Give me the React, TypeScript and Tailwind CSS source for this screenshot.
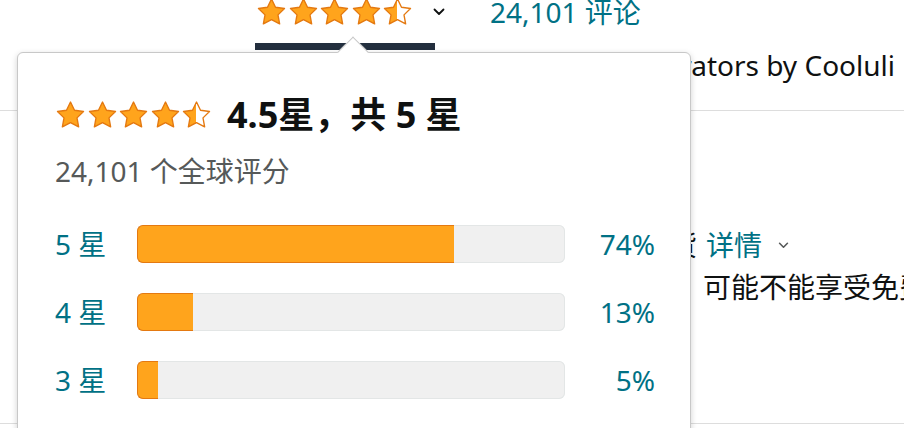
import React from 'react';

const rows = [
  { label: '5 星', pct: 74 },
  { label: '4 星', pct: 13 },
  { label: '3 星', pct: 5 },
];

const STAR = 'M12 1.6l3.2 6.6 7.2 1-5.2 5.1 1.3 7.2L12 18.1l-6.5 3.4 1.3-7.2L1.6 9.2l7.2-1z';

const Star = ({ half, id }: { half?: boolean; id: string }) => (
  <svg viewBox="0 0 24 24" className="w-[31px] h-[30px] shrink-0">
    <defs>
      <linearGradient id={id} x1="0" x2="1" y1="0" y2="0">
        <stop offset="50%" stopColor="#FFA41C" />
        <stop offset="50%" stopColor="#ffffff" />
      </linearGradient>
    </defs>
    <path d={STAR} fill={half ? `url(#${id})` : '#FFA41C'} stroke="#E47911" strokeWidth="1.1" strokeLinejoin="round" />
  </svg>
);

const Stars = ({ prefix }: { prefix: string }) => (
  <div className="flex items-center gap-[0.5px]">
    {[0, 1, 2, 3].map((i) => (
      <Star key={i} id={`${prefix}-${i}`} />
    ))}
    <Star half id={`${prefix}-h`} />
  </div>
);

const Chevron = ({ className }: { className: string }) => (
  <svg viewBox="0 0 12 8" className={className} fill="none">
    <path d="M1.5 1.5l4.5 4.5 4.5-4.5" stroke="currentColor" strokeWidth="1.8" strokeLinecap="round" strokeLinejoin="round" />
  </svg>
);

export default function App() {
  return (
    <div className="relative w-[904px] h-[428px] overflow-hidden bg-white text-[#0F1111] font-['Noto_Sans','Noto_Sans_CJK_SC',sans-serif]">
      {/* top rating line */}
      <div className="flex items-center h-[28px] -mt-[2px] pl-[256px]">
        <Stars prefix="top" />
        <Chevron className="w-[12px] h-[8px] ml-[20px] text-[#0F1111]" />
        <span className="ml-[45px] text-[28px] leading-none text-[#007185]">24,101 评论</span>
      </div>
      <div className="ml-[255px] mt-[17px] w-[180px] h-[7px] bg-[#232F3E]" />

      {/* page content behind the popover */}
      <div className="flex justify-end pr-[9px] -mt-[2px] h-[63px] pt-[3px] border-b border-[#DDDDDD] text-[28px] leading-none whitespace-nowrap">
        Mini Fridge Refrigerators by Cooluli
      </div>
      <div className="flex items-center mt-[120px] pl-[585px] text-[28px] leading-none whitespace-nowrap">
        <span>免费退货</span>
        <span className="ml-[9px] text-[#007185]">详情</span>
        <Chevron className="w-[11px] h-[7px] ml-[16px] text-[#565959]" />
      </div>
      <div className="mt-[14px] pl-[703px] h-[151px] text-[28px] leading-none whitespace-nowrap border-b border-[#DDDDDD]">
        可能不能享受免费配送
      </div>

      {/* popover */}
      <div className="absolute left-[17px] top-[52px] w-[674px] h-[400px] bg-white border border-[#C8C8C8] rounded-[6px] shadow-[0_2px_6px_rgba(0,0,0,0.18)]">
        <div className="absolute left-[324px] -top-[12px] w-[22px] h-[22px] bg-white border-t border-l border-[#C8C8C8] rotate-45" />
        <div className="relative pl-[37px] pt-[44px]">
          <div className="flex items-center">
            <Stars prefix="pop" />
            <span className="ml-[15px] text-[36px] font-bold leading-none">4.5星，共 5 星</span>
          </div>
          <div className="mt-[24px] text-[28px] leading-none text-[#565959]">24,101 个全球评分</div>
          <div className="mt-[40px] flex flex-col gap-[30px]">
            {rows.map((r) => (
              <div key={r.label} className="flex items-center">
                <span className="w-[82px] text-[28px] leading-none text-[#007185]">{r.label}</span>
                <div className="w-[428px] h-[38px] rounded-[6px] bg-[#F0F0F0] shadow-[inset_0_0_0_1px_#E3E6E6]">
                  <div
                    className="h-full bg-[#FFA41C] border border-r-0 border-[#E47911] rounded-l-[6px]"
                    style={{ width: `${r.pct}%` }}
                  />
                </div>
                <span className="w-[90px] text-right text-[28px] leading-none text-[#007185]">{r.pct}%</span>
              </div>
            ))}
          </div>
        </div>
      </div>
    </div>
  );
}
